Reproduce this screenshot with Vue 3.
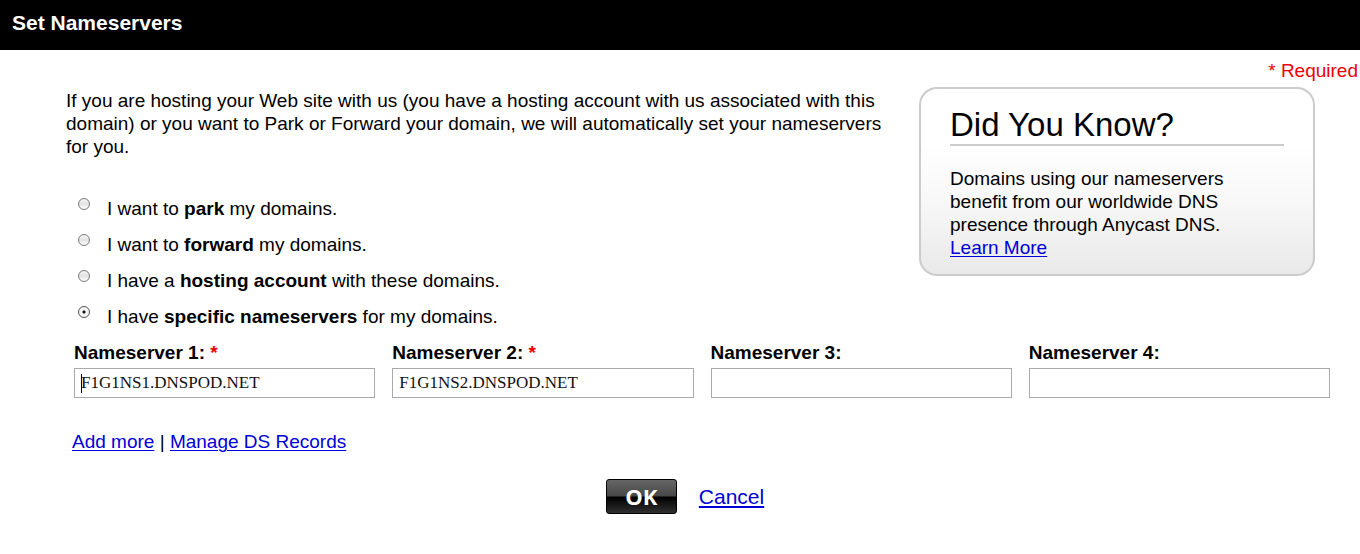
<script setup>
import { ref, reactive } from 'vue'

const choice = ref('specific')
const options = [
  { id: 'park', before: 'I want to ', strong: 'park', after: ' my domains.' },
  { id: 'forward', before: 'I want to ', strong: 'forward', after: ' my domains.' },
  { id: 'hosting', before: 'I have a ', strong: 'hosting account', after: ' with these domains.' },
  { id: 'specific', before: 'I have ', strong: 'specific nameservers', after: ' for my domains.' },
]
const servers = reactive([
  { n: 1, value: 'F1G1NS1.DNSPOD.NET', required: true },
  { n: 2, value: 'F1G1NS2.DNSPOD.NET', required: true },
  { n: 3, value: '', required: false },
  { n: 4, value: '', required: false },
])
</script>

<template>
  <form class="dialog" @submit.prevent>
    <header class="bar"><h1>Set Nameservers</h1></header>
    <p class="note">* Required</p>
    <div class="top">
      <div class="main">
        <p class="intro">
          If you are hosting your Web site with us (you have a hosting account with us associated with this
          domain) or you want to Park or Forward your domain, we will automatically set your nameservers
          for you.
        </p>
        <div class="options" role="radiogroup" aria-label="Nameserver option">
          <label v-for="o in options" :key="o.id" class="option">
            <input v-model="choice" type="radio" name="choice" :value="o.id" />
            <span>{{ o.before }}<b>{{ o.strong }}</b>{{ o.after }}</span>
          </label>
        </div>
      </div>
      <aside class="card">
        <h2>Did You Know?</h2>
        <p>Domains using our nameservers benefit from our worldwide DNS presence through Anycast DNS.</p>
        <a href="#">Learn More</a>
      </aside>
    </div>
    <div class="fields">
      <div v-for="s in servers" :key="s.n" class="field">
        <label :for="'ns' + s.n">Nameserver {{ s.n }}: <span v-if="s.required" class="star">*</span></label>
        <div class="box">
          <span v-if="s.n === 1" class="caret"></span>
          <input :id="'ns' + s.n" v-model="s.value" type="text" spellcheck="false" />
        </div>
      </div>
    </div>
    <div class="links"><a href="#">Add more</a> | <a href="#">Manage DS Records</a></div>
    <div class="actions">
      <button type="submit">OK</button>
      <a href="#">Cancel</a>
    </div>
  </form>
</template>

<style>
body {
  margin: 0;
  background: #fff;
}
</style>

<style scoped>
.dialog {
  font: 19px/23px "Liberation Sans", Arial, sans-serif;
  color: #000;
}
h1, h2, p {
  margin: 0;
}
a {
  color: #0000d8;
  text-decoration: underline;
  text-decoration-thickness: 1px;
  text-underline-offset: 2px;
}
.bar {
  background: #000;
  color: #fff;
  padding: 11px 12px 15px;
}
.bar h1 {
  font-size: 21px;
  line-height: 24px;
}
.note {
  color: #f00000;
  text-align: right;
  padding: 9px 2px 5px 0;
}
.top {
  display: flex;
  align-items: flex-start;
  justify-content: space-between;
  gap: 20px;
  padding: 0 45px 0 66px;
}
.main {
  flex: 1;
  padding-top: 2px;
}
.options {
  display: grid;
  padding: 32px 0 0 12px;
}
.option {
  display: flex;
  align-items: center;
  gap: 17px;
  height: 36px;
}
.option input {
  appearance: none;
  box-sizing: border-box;
  width: 12px;
  height: 12px;
  margin: 0 0 8px;
  border: 1px solid #777;
  border-radius: 50%;
  background: linear-gradient(#f6f6f6, #e2e2e2 50%, #fff);
}
.option input:checked {
  background: radial-gradient(circle, #111 0 1px, #f2f2f2 2px);
  border-color: #555;
}
.card {
  box-sizing: border-box;
  width: 396px;
  flex-shrink: 0;
  border: 2px solid #ccc;
  border-radius: 18px;
  background: linear-gradient(#fff 30%, #f8f8f8 60%, #e9e9e9);
  padding: 16px 29px 15px;
}
.card h2 {
  font-size: 33px;
  line-height: 39px;
  font-weight: 400;
  border-bottom: 2px solid #ccc;
  margin-bottom: 21px;
}
.card p {
  max-width: 290px;
}
.fields {
  display: grid;
  grid-template-columns: repeat(4, 1fr);
  gap: 17px;
  padding: 7px 30px 0 74px;
}
.field label {
  display: block;
  font-weight: 700;
  margin-bottom: 4px;
}
.star {
  color: #f00000;
}
.box {
  position: relative;
}
.box input {
  display: block;
  box-sizing: border-box;
  width: 100%;
  height: 30px;
  border: 1px solid #aaa;
  padding: 0 6px;
  background: #fff;
  color: #111;
  font: 17px/28px "Liberation Serif", serif;
}
.caret {
  position: absolute;
  left: 7px;
  top: 6px;
  width: 1px;
  height: 19px;
  background: #000;
}
.links {
  padding: 32px 72px 0;
}
.actions {
  display: flex;
  align-items: center;
  justify-content: center;
  gap: 22px;
  padding: 26px 0 40px 10px;
}
.actions a {
  font-size: 21px;
  text-decoration-thickness: 2px;
}
.actions button {
  width: 71px;
  height: 35px;
  padding: 0;
  border: 1px solid #000;
  border-radius: 3px;
  background: linear-gradient(#666, #484848 48%, #000 52%, #303030);
  color: #fff;
  font: 700 22px/31px "Open Sans", sans-serif;
}
</style>
